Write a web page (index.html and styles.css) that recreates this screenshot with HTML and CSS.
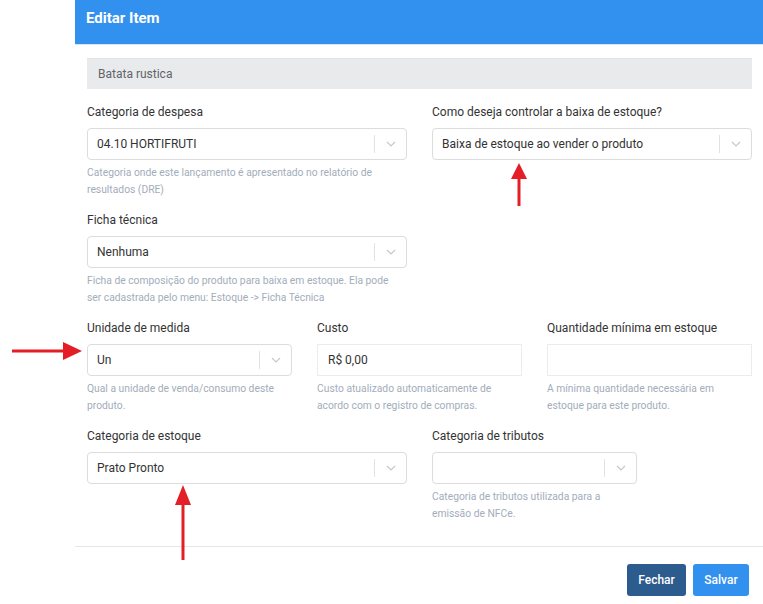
FILE: index.html
```html
<!DOCTYPE html>
<html lang="pt">
<head>
<meta charset="utf-8">
<title>Editar Item</title>
<link rel="stylesheet" href="styles.css">
</head>
<body>
<div class="modal">
  <div class="modal-header">Editar Item</div>
  <div class="modal-body">
    <div class="name-box">Batata rustica</div>

    <div class="row two">
      <div class="field">
        <div class="label">Categoria de despesa</div>
        <div class="select"><span class="value">04.10 HORTIFRUTI</span><span class="sep"></span><span class="caret"><svg width="10" height="6" viewBox="0 0 10 6"><path d="M1 1 L5 5 L9 1" fill="none" stroke="#c8c8c8" stroke-width="1.2"/></svg></span></div>
        <div class="help">Categoria onde este lançamento é apresentado no relatório de resultados (DRE)</div>
      </div>
      <div class="field">
        <div class="label">Como deseja controlar a baixa de estoque?</div>
        <div class="select"><span class="value">Baixa de estoque ao vender o produto</span><span class="sep"></span><span class="caret"><svg width="10" height="6" viewBox="0 0 10 6"><path d="M1 1 L5 5 L9 1" fill="none" stroke="#c8c8c8" stroke-width="1.2"/></svg></span></div>
      </div>
    </div>

    <div class="row two">
      <div class="field">
        <div class="label">Ficha técnica</div>
        <div class="select"><span class="value">Nenhuma</span><span class="sep"></span><span class="caret"><svg width="10" height="6" viewBox="0 0 10 6"><path d="M1 1 L5 5 L9 1" fill="none" stroke="#c8c8c8" stroke-width="1.2"/></svg></span></div>
        <div class="help">Ficha de composição do produto para baixa em estoque. Ela pode<br>ser cadastrada pelo menu: Estoque -&gt; Ficha Técnica</div>
      </div>
      <div class="field"></div>
    </div>

    <div class="row three">
      <div class="field">
        <div class="label">Unidade de medida</div>
        <div class="select"><span class="value">Un</span><span class="sep"></span><span class="caret"><svg width="10" height="6" viewBox="0 0 10 6"><path d="M1 1 L5 5 L9 1" fill="none" stroke="#c8c8c8" stroke-width="1.2"/></svg></span></div>
        <div class="help">Qual a unidade de venda/consumo deste produto.</div>
      </div>
      <div class="field">
        <div class="label">Custo</div>
        <div class="input">R$ 0,00</div>
        <div class="help">Custo atualizado automaticamente de acordo com o registro de compras.</div>
      </div>
      <div class="field">
        <div class="label">Quantidade mínima em estoque</div>
        <div class="input"></div>
        <div class="help">A mínima quantidade necessária em estoque para este produto.</div>
      </div>
    </div>

    <div class="row two">
      <div class="field">
        <div class="label">Categoria de estoque</div>
        <div class="select"><span class="value">Prato Pronto</span><span class="sep"></span><span class="caret"><svg width="10" height="6" viewBox="0 0 10 6"><path d="M1 1 L5 5 L9 1" fill="none" stroke="#c8c8c8" stroke-width="1.2"/></svg></span></div>
      </div>
      <div class="field narrow">
        <div class="label">Categoria de tributos</div>
        <div class="select"><span class="value"></span><span class="sep"></span><span class="caret"><svg width="10" height="6" viewBox="0 0 10 6"><path d="M1 1 L5 5 L9 1" fill="none" stroke="#c8c8c8" stroke-width="1.2"/></svg></span></div>
        <div class="help">Categoria de tributos utilizada para a emissão de NFCe.</div>
      </div>
    </div>
  </div>
  <div class="modal-footer">
    <button class="btn btn-dark">Fechar</button>
    <button class="btn btn-primary">Salvar</button>
  </div>
</div>

<svg class="annotations" width="763" height="604" viewBox="0 0 763 604">
  <g fill="#e41e26" stroke="#e41e26">
    <line x1="519" y1="176" x2="519" y2="206" stroke-width="3"/>
    <polygon points="519,163 511,179 527,179" stroke="none"/>
    <line x1="12" y1="351" x2="66" y2="351" stroke-width="3"/>
    <polygon points="82,351 63,342 63,360" stroke="none"/>
    <line x1="183" y1="502" x2="183" y2="560" stroke-width="3"/>
    <polygon points="183,485 175,505 191,505" stroke="none"/>
  </g>
</svg>
</body>
</html>
```

FILE: styles.css
```css
* { box-sizing: border-box; }

body {
  margin: 0;
  background: #ffffff;
  font-family: Roboto, "Liberation Sans", Arial, sans-serif;
  color: #333;
  width: 763px;
  height: 604px;
  overflow: hidden;
  position: relative;
}

.modal {
  margin-left: 75px;
  width: 688px;
}

.modal-header {
  height: 45px;
  background: #3291ee;
  border-bottom: 1px solid #d6e7f8;
  color: #fff;
  font-size: 15px;
  font-weight: 700;
  padding: 10px 11px;
  line-height: 17px;
}

.modal-body {
  padding: 13px 11px 10px 12px;
}

.name-box {
  height: 31px;
  background: #e9eaec;
  border-top: 1px solid #e2e3e5;
  color: #5f656b;
  font-size: 12px;
  line-height: 30px;
  padding-left: 11px;
  margin-bottom: 15px;
}

.row {
  display: grid;
  column-gap: 25px;
  height: 108px;
}
.row.two { grid-template-columns: 1fr 1fr; }
.row.three { grid-template-columns: 1fr 1fr 1fr; }

.field.narrow { width: 205px; }

.label {
  font-size: 12px;
  line-height: 16px;
  color: #333;
  margin-bottom: 8px;
}

.select {
  height: 32px;
  border: 1px solid #dcdcdc;
  border-radius: 4px;
  display: flex;
  align-items: center;
  background: #fff;
}

.select .value {
  flex: 1;
  padding-left: 9px;
  font-size: 12px;
  color: #333;
}

.select .sep {
  width: 1px;
  height: 18px;
  background: #e2e2e2;
}

.select .caret {
  width: 31px;
  display: flex;
  justify-content: center;
  align-items: center;
}
.caret svg { display: block; }

.input {
  height: 32px;
  border: 1px solid #ececec;
  font-size: 12px;
  line-height: 30px;
  padding-left: 10px;
  color: #333;
}

.help {
  margin-top: 4px;
  font-size: 10.3px;
  line-height: 17px;
  color: #a2adba;
}

.modal-footer {
  border-top: 1px solid #e6e6e6;
  padding: 17px 14px 0 0;
  display: flex;
  justify-content: flex-end;
  gap: 7px;
}

.btn {
  height: 32px;
  border: none;
  border-radius: 3px;
  color: #fff;
  font-family: Roboto, "Liberation Sans", Arial, sans-serif;
  font-size: 12px;
  font-weight: 500;
  padding: 0;
}
.btn-dark { background: #2c5b8d; width: 59px; }
.btn-primary { background: #3291ee; width: 56px; }

.annotations {
  position: absolute;
  left: 0;
  top: 0;
  pointer-events: none;
}
```
